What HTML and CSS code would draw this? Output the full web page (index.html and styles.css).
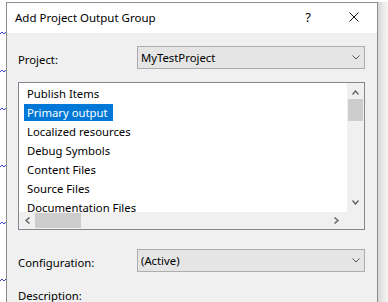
FILE: index.html
```html
<!DOCTYPE html>
<html lang="en">
<head>
    <meta charset="UTF-8">
    <meta name="viewport" content="width=device-width, initial-scale=1.0">
    <title>Add Project Output Group</title>
    <link rel="stylesheet" href="styles.css">
</head>
<body>
    <div class="desktop">
        <div class="designer-strip">
            <svg width="6" height="302" viewBox="0 0 6 302">
                <polyline points="0,34 2,32 4,34 6,32" />
                <polyline points="0,72 2,70 4,72 6,70" />
                <polyline points="0,110 2,108 4,110 6,108" />
                <polyline points="0,167 2,165 4,167 6,165" />
                <polyline points="0,224 2,222 4,224 6,222" />
                <polyline points="0,281 2,279 4,281 6,279" />
            </svg>
        </div>

        <div class="dialog">
            <div class="title-bar">
                <span class="title-text">Add Project Output Group</span>
                <span class="title-help">?</span>
                <span class="title-close">
                    <svg width="10" height="10" viewBox="0 0 10 10">
                        <path d="M0.5 0.5 L9.5 9.5 M9.5 0.5 L0.5 9.5" />
                    </svg>
                </span>
            </div>

            <div class="dialog-body">
                <div class="field-row">
                    <label class="field-label">Project:</label>
                    <div class="combo">
                        <span>MyTestProject</span>
                        <svg class="combo-arrow" width="8" height="5" viewBox="0 0 8 5">
                            <path d="M0.5 0.5 L4 4 L7.5 0.5" />
                        </svg>
                    </div>
                </div>

                <div class="list-box">
                    <ul class="list-items">
                        <li><span>Publish Items</span></li>
                        <li><span class="selected">Primary output</span></li>
                        <li><span>Localized resources</span></li>
                        <li><span>Debug Symbols</span></li>
                        <li><span>Content Files</span></li>
                        <li><span>Source Files</span></li>
                        <li><span>Documentation Files</span></li>
                    </ul>

                    <div class="vscroll">
                        <svg width="7" height="5" viewBox="0 0 7 5"><path d="M0.5 4.5 L3.5 1 L6.5 4.5" /></svg>
                        <div class="vscroll-track">
                            <div class="vscroll-thumb"></div>
                        </div>
                        <svg width="7" height="5" viewBox="0 0 7 5"><path d="M0.5 0.5 L3.5 4 L6.5 0.5" /></svg>
                    </div>

                    <div class="hscroll">
                        <svg width="5" height="7" viewBox="0 0 5 7"><path d="M4.5 0.5 L1 3.5 L4.5 6.5" /></svg>
                        <div class="hscroll-track">
                            <div class="hscroll-thumb"></div>
                        </div>
                        <svg width="5" height="7" viewBox="0 0 5 7"><path d="M0.5 0.5 L4 3.5 L0.5 6.5" /></svg>
                    </div>

                    <div class="scroll-corner"></div>
                </div>

                <div class="field-row config-row">
                    <label class="field-label">Configuration:</label>
                    <div class="combo">
                        <span>(Active)</span>
                        <svg class="combo-arrow" width="8" height="5" viewBox="0 0 8 5">
                            <path d="M0.5 0.5 L4 4 L7.5 0.5" />
                        </svg>
                    </div>
                </div>

                <div class="field-row desc-row">
                    <label class="field-label">Description:</label>
                </div>
            </div>
        </div>

        <div class="shadow-strip"></div>
    </div>
</body>
</html>
```

FILE: styles.css
```css
* {
    margin: 0;
    padding: 0;
    box-sizing: border-box;
    font-family: 'Segoe UI', 'Noto Sans', sans-serif;
}

body {
    background-color: white;
    width: 388px;
    height: 302px;
    overflow: hidden;
    font-size: 11.3px;
    color: #000;
}

.desktop {
    display: flex;
    height: 302px;
}

/* designer surface behind the dialog */
.designer-strip {
    width: 6px;
    flex-shrink: 0;
}

.designer-strip polyline {
    fill: none;
    stroke: #3c46c8;
    stroke-width: 1;
}

.dialog {
    width: 372px;
    flex-shrink: 0;
    margin-top: 2px;
    border: 1px solid #8c8c8c;
    border-bottom: none;
    background-color: #f0f0f0;
    display: flex;
    flex-direction: column;
}

.shadow-strip {
    flex: 1;
    margin-top: 2px;
    background: linear-gradient(to right, #d6d6d6, #ececec 60%, #f4f4f4);
}

.title-bar {
    height: 30px;
    background-color: white;
    display: flex;
    align-items: center;
    padding-left: 8px;
}

.title-text {
    flex: 1;
    font-size: 11.5px;
    padding-bottom: 2px;
}

.title-help {
    width: 46px;
    text-align: center;
    font-size: 13px;
    padding-bottom: 2px;
}

.title-close {
    width: 46px;
    height: 30px;
    display: flex;
    align-items: center;
    justify-content: center;
    padding-bottom: 2px;
}

.title-close path {
    stroke: #111;
    stroke-width: 1;
    fill: none;
}

.dialog-body {
    padding: 13px 12px 0 11px;
}

.field-row {
    display: flex;
    align-items: center;
    height: 23px;
}

.field-label {
    width: 119px;
    padding-top: 3px;
}

.combo {
    width: 228px;
    height: 23px;
    background-color: #e5e5e5;
    border: 1px solid #adadad;
    display: flex;
    align-items: center;
    padding-left: 3px;
    padding-right: 4px;
}

.combo span {
    flex: 1;
    padding-bottom: 1px;
}

.combo-arrow path {
    stroke: #555;
    stroke-width: 1;
    fill: none;
}

.list-box {
    margin-top: 13px;
    width: 347px;
    height: 148px;
    background-color: white;
    border: 1px solid #828790;
    display: grid;
    grid-template-columns: 1fr 17px;
    grid-template-rows: 1fr 17px;
}

.list-items {
    list-style: none;
    overflow: hidden;
    padding: 2px 0 0 5px;
}

.list-items li {
    height: 19px;
}

.list-items span {
    display: inline-block;
    height: 17px;
    line-height: 17px;
    padding: 0 5px 0 3px;
}

.list-items .selected {
    background-color: #0078d7;
    color: white;
}

.vscroll {
    background-color: #f0f0f0;
    display: flex;
    flex-direction: column;
    align-items: center;
    padding-top: 7px;
    padding-bottom: 7px;
}

.vscroll-track {
    flex: 1;
    width: 100%;
    padding-top: 4px;
}

.vscroll-thumb {
    width: 15px;
    height: 22px;
    margin-left: 1px;
    background-color: #cdcdcd;
}

.hscroll {
    background-color: #f0f0f0;
    display: flex;
    align-items: center;
    padding-left: 6px;
    padding-right: 8px;
}

.hscroll-track {
    flex: 1;
    height: 100%;
    padding-left: 5px;
    padding-top: 1px;
}

.hscroll-thumb {
    width: 46px;
    height: 15px;
    background-color: #cdcdcd;
}

.vscroll path,
.hscroll path {
    stroke: #606060;
    stroke-width: 1.4;
    fill: none;
}

.scroll-corner {
    background-color: #f0f0f0;
}

.config-row {
    margin-top: 19px;
}

.desc-row {
    margin-top: 10px;
}
```
